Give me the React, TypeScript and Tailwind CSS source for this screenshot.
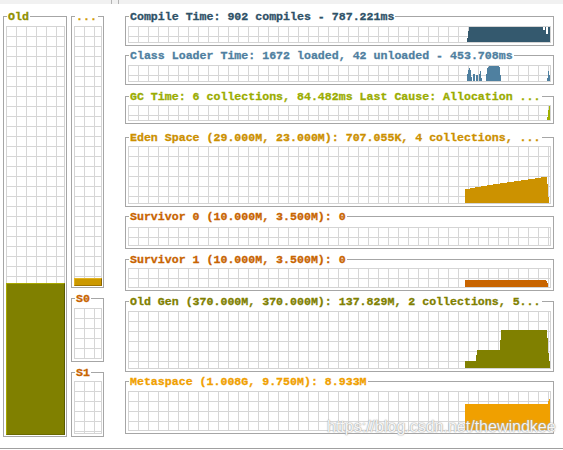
import React from "react";

const GRID =
  "bg-white bg-[linear-gradient(to_right,transparent_9px,#d6d6d6_9px),linear-gradient(to_bottom,transparent_9px,#d6d6d6_9px)] bg-[length:10px_10px]";

function Panel({
  title,
  tone,
  className = "",
  children,
}: {
  title: string;
  tone: string;
  className?: string;
  children?: React.ReactNode;
}) {
  return (
    <div className={`relative border border-[#a6a6a6] ${className}`}>
      <span
        className={`absolute left-[3px] top-[-6px] whitespace-nowrap bg-white px-[1px] text-[11.6px] font-bold leading-[12px] [-webkit-text-stroke:0.3px_currentColor] ${tone}`}
      >
        {title}
      </span>
      {children}
    </div>
  );
}

function Grid({ className = "", children }: { className?: string; children?: React.ReactNode }) {
  return <div className={`relative border border-[#d4d4d4] ${GRID} ${className}`}>{children}</div>;
}

function Chart({ h, d, fill }: { h: number; d: string; fill: string }) {
  return (
    <svg className="absolute left-0 top-0" width={421} height={h} viewBox={`0 0 421 ${h}`} shapeRendering="crispEdges">
      <path d={d} fill={fill} />
    </svg>
  );
}

export default function App() {
  return (
    <div className="relative flex h-[450px] w-[563px] flex-col overflow-hidden bg-white [font-family:'Liberation_Mono',monospace]">
      <div className="flex h-[4px] bg-[#f1f1f1]">
        <div className="ml-[111px] w-px bg-[#b4b4b4]" />
        <div className="ml-[6px] w-px bg-[#b4b4b4]" />
      </div>

      <div className="flex h-[444px] pl-[3px] pt-[12px]">
        {/* old gen bar */}
        <Panel title="Old" tone="text-[#909000]" className="flex h-[421px] w-[64px] flex-col pb-[1px] pl-[2px] pr-[1px] pt-[9px]">
          <Grid className="flex flex-1 flex-col justify-end">
            <div className="-mx-px -mb-px h-[152px] border border-[#a8a800] border-b-[#6a6a00] border-r-[#5a5a00] bg-[#808000]" />
          </Grid>
        </Panel>

        {/* eden + survivors */}
        <div className="ml-[4px] flex w-[33px] flex-col">
          <Panel title="..." tone="text-[#d09a00]" className="flex h-[272px] flex-col pb-[1px] pl-[2px] pr-[1px] pt-[9px]">
            <Grid className="flex flex-1 flex-col justify-end">
              <div className="-mx-px -mb-px h-[8px] border border-[#e4b420] border-b-[#a07400] border-r-[#8a6400] bg-[#cc9900]" />
            </Grid>
          </Panel>
          <Panel title="S0" tone="text-[#c86400]" className="mt-[10px] flex h-[64px] flex-col pb-[2px] pl-[2px] pr-[1px] pt-[9px]">
            <Grid className="flex-1" />
          </Panel>
          <Panel title="S1" tone="text-[#c86400]" className="mt-[10px] flex h-[65px] flex-col pb-[2px] pl-[2px] pr-[1px] pt-[8px]">
            <Grid className="flex-1" />
          </Panel>
        </div>

        {/* graphs */}
        <div className="ml-[21px] flex w-[429px] flex-col">
          <Panel title="Compile Time: 902 compiles - 787.221ms" tone="text-[#2e5167]" className="px-[2px] pb-[2px] pt-[9px]">
            <Grid className="h-[17px]">
              <Chart
                h={15}
                fill="#34596e"
                d="M338,15 L340,0 L414,0 L415,6 L416,0 L417,0 L418,14 L419,0 L421,0 L421,15 Z"
              />
            </Grid>
          </Panel>

          <Panel title="Class Loader Time: 1672 loaded, 42 unloaded - 453.708ms" tone="text-[#4f7fa0]" className="mt-[9px] px-[2px] pb-[2px] pt-[9px]">
            <Grid className="h-[17px]">
              <Chart
                h={15}
                fill="#4f80a0"
                d="M338,15 L339,2 L340,5 L341,0 L343,15 Z M344,15 L345,1 L346,15 Z M347,15 L348,3 L349,15 Z M350,15 L351,2 L353,15 Z M357,15 L358,2 L360,0 L369,0 L371,2 L372,15 Z M418,15 L420,2 L421,15 Z"
              />
            </Grid>
          </Panel>

          <Panel title="GC Time: 6 collections, 84.482ms Last Cause: Allocation ..." tone="text-[#9aac00]" className="mt-[11px] px-[2px] pb-[2px] pt-[8px]">
            <Grid className="h-[16px]">
              <Chart h={14} fill="#a0b000" d="M418,14 L419,8 L420,0 L421,0 L421,14 Z" />
            </Grid>
          </Panel>

          <Panel title="Eden Space (29.000M, 23.000M): 707.055K, 4 collections, ..." tone="text-[#cc9000]" className="mt-[13px] px-[2px] pb-[2px] pt-[8px]">
            <Grid className="h-[58px]">
              <Chart
                h={56}
                fill="#cc9200"
                d="M336,56 V42 H341 V41 H346 V40 H352 V39 H358 V38 H364 V37 H371 V36 H378 V35 H385 V34 H392 V33 H399 V32 H406 V31 H412 V30 H418 L420,56 Z"
              />
            </Grid>
          </Panel>

          <Panel title="Survivor 0 (10.000M, 3.500M): 0" tone="text-[#c86400]" className="mt-[9px] px-[2px] pb-[2px] pt-[10px]">
            <Grid className="h-[19px]" />
          </Panel>

          <Panel title="Survivor 1 (10.000M, 3.500M): 0" tone="text-[#c86400]" className="mt-[10px] px-[2px] pb-[2px] pt-[8px]">
            <Grid className="h-[20px]">
              <Chart h={18} fill="#c86400" d="M336,18 V11 H417 L419,15 V18 Z" />
            </Grid>
          </Panel>

          <Panel title="Old Gen (370.000M, 370.000M): 137.829M, 2 collections, 5..." tone="text-[#808000]" className="mt-[10px] px-[2px] pb-[2px] pt-[9px]">
            <Grid className="h-[58px]">
              <Chart
                h={56}
                fill="#808000"
                d="M336,56 V49 H347 L348,38 H371 L372,18 H418 L420,49 H421 V56 Z"
              />
            </Grid>
          </Panel>

          <Panel title="Metaspace (1.008G, 9.750M): 8.933M" tone="text-[#f0a000]" className="mt-[9px] px-[2px] pb-[2px] pt-[9px]">
            <Grid className="h-[40px]">
              <Chart h={38} fill="#f0a000" d="M336,38 V12 H418 L419,11 L420,7 L421,7 V38 Z" />
            </Grid>
          </Panel>
        </div>
      </div>

      <div className="h-px bg-[#a0a0a0]" />

      <span className="absolute left-[327px] top-[417px] whitespace-nowrap text-[16px] leading-[20px] text-[#f6f6f6] [font-family:'Liberation_Sans',Arial,sans-serif] [text-shadow:0_0_1px_#909090,0_0_2px_#b8b8b8]">
        https://blog.csdn.net/thewindkee
      </span>
    </div>
  );
}
